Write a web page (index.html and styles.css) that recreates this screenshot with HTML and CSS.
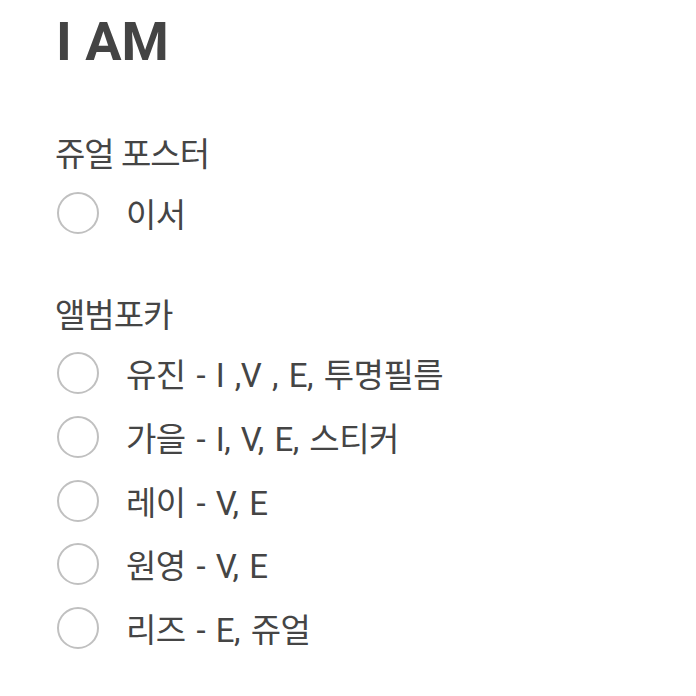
FILE: index.html
```html
<!DOCTYPE html>
<html lang="ko">
<head>
    <meta charset="UTF-8">
    <title>I AM</title>
    <link rel="stylesheet" href="styles.css">
</head>
<body>
<div class="page">
    <h1 class="title">I AM</h1>

    <div class="group">
        <p class="group-name">쥬얼 포스터</p>
        <ul class="options">
            <li><span class="radio"></span>이서</li>
        </ul>
    </div>

    <div class="group">
        <p class="group-name">앨범포카</p>
        <ul class="options">
            <li><span class="radio"></span>유진 - I ,V , E, 투명필름</li>
            <li><span class="radio"></span>가을 - I, V, E, 스티커</li>
            <li><span class="radio"></span>레이 - V, E</li>
            <li><span class="radio"></span>원영 - V, E</li>
            <li><span class="radio"></span>리즈 - E, 쥬얼</li>
        </ul>
    </div>
</div>
</body>
</html>
```

FILE: styles.css
```css
* {
    margin: 0;
    padding: 0;
}

body {
    background-color: #fff;
    color: #444;
    font-family: Roboto, "Noto Sans CJK KR", sans-serif;
}

.page {
    padding: 10px 0 0 55px;
}

.title {
    font-size: 54px;
    font-weight: bold;
    line-height: 64px;
    color: #444;
    padding-left: 1px;
}

.group {
    margin-top: 61px;
}

.group + .group {
    margin-top: 51px;
}

.group-name,
.options li {
    font-size: 33px;
    letter-spacing: -0.5px;
    color: #454545;
}

.group-name {
    line-height: 40px;
    letter-spacing: -1px;
}

ul {
    list-style-type: none;
}

.options {
    margin-top: 6px;
}

.options li {
    display: flex;
    align-items: center;
    height: 63.6px;
    word-spacing: 3px;
}

.radio {
    width: 38px;
    height: 38px;
    border: 2px solid #c0c0c0;
    border-radius: 50%;
    margin: 0 27px 0 2px;
    flex-shrink: 0;
}
```
